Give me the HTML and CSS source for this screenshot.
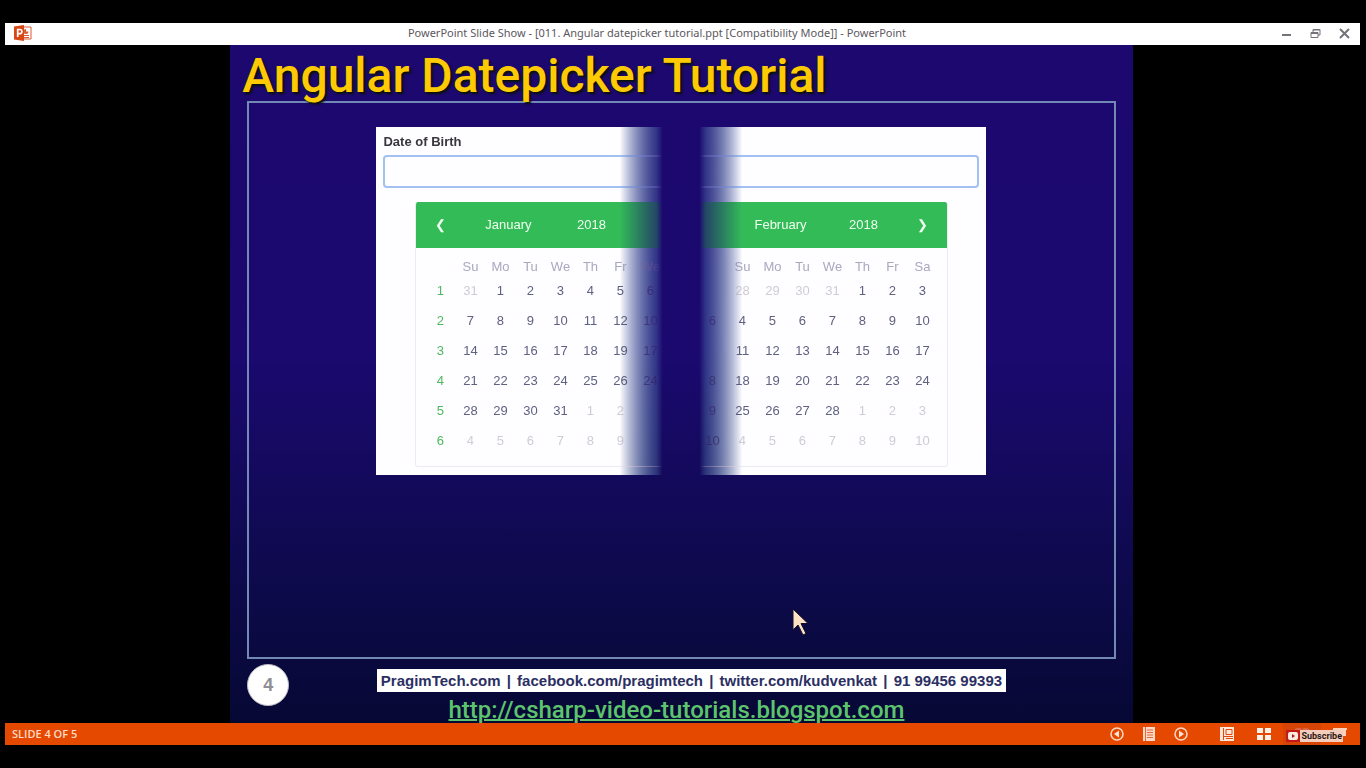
FILE: index.html
```html
<!DOCTYPE html>
<html lang="en">
<head>
<meta charset="utf-8">
<title>PowerPoint Slide Show</title>
<link rel="stylesheet" href="styles.css">
</head>
<body>
<header class="titlebar">
  <svg class="app-logo" viewBox="0 0 18 16" width="18" height="16" aria-hidden="true">
    <path d="M9 2h8v12H9" fill="#fff" stroke="#dc5a34" stroke-width="1"/>
    <path d="M12 4a2.5 2.5 0 1 0 2.500 2.500H12z" fill="#dc5a34"/>
    <path d="M10 10.500h5M10 12.500h5" stroke="#dc5a34"/>
    <path d="M0 1.500 10 0v16L0 14.500z" fill="#d94717"/>
    <path d="M3.700 12V4.500h2.100a2 2 0 0 1 0 4.200H3.700" fill="none" stroke="#fff" stroke-width="1.700"/>
  </svg>
  <h1 class="window-title">PowerPoint Slide Show - [011. Angular datepicker tutorial.ppt [Compatibility Mode]] - PowerPoint</h1>
  <div class="window-buttons">
    <button type="button" aria-label="Minimize"><svg viewBox="0 0 11 11" width="11" height="11"><path d="M1 7h9" stroke="#77727a" stroke-width="2"/></svg></button>
    <button type="button" aria-label="Restore"><svg viewBox="0 0 11 11" width="11" height="11"><path d="M3 4V1.500h7V7H8M3 2h7M1 4.500h7v5H1zM1 5.500h7" fill="none" stroke="#77727a"/></svg></button>
    <button type="button" aria-label="Close"><svg viewBox="0 0 11 11" width="11" height="11"><path d="M1 1l9 9M10 1l-9 9" stroke="#77727a" stroke-width="2"/></svg></button>
  </div>
</header>

<main class="slide">
  <h2 class="slide-title">Angular Datepicker Tutorial</h2>
  <section class="frame">
    <div class="picker">
      <label class="field-label" for="dob">Date of Birth</label>
      <input class="field" id="dob" type="text">
      <div class="calendar">
        <div class="months-bar">
          <div class="month-head">
            <button type="button" aria-label="Previous">❮</button>
            <button type="button">January</button>
            <button type="button">2018</button>
          </div>
          <div class="month-head">
            <span></span>
            <button type="button">February</button>
            <button type="button">2018</button>
            <span></span>
            <button type="button" aria-label="Next">❯</button>
          </div>
        </div>
        <div class="months">
          <table class="month">
            <thead><tr><th></th><th>Su</th><th>Mo</th><th>Tu</th><th>We</th><th>Th</th><th>Fr</th><th>We</th></tr></thead>
            <tbody>
              <tr><th>1</th><td class="other">31</td><td>1</td><td>2</td><td>3</td><td>4</td><td>5</td><td>6</td></tr>
              <tr><th>2</th><td>7</td><td>8</td><td>9</td><td>10</td><td>11</td><td>12</td><td>10</td></tr>
              <tr><th>3</th><td>14</td><td>15</td><td>16</td><td>17</td><td>18</td><td>19</td><td>17</td></tr>
              <tr><th>4</th><td>21</td><td>22</td><td>23</td><td>24</td><td>25</td><td>26</td><td>24</td></tr>
              <tr><th>5</th><td>28</td><td>29</td><td>30</td><td>31</td><td class="other">1</td><td class="other">2</td><td></td></tr>
              <tr><th>6</th><td class="other">4</td><td class="other">5</td><td class="other">6</td><td class="other">7</td><td class="other">8</td><td class="other">9</td><td></td></tr>
            </tbody>
          </table>
          <table class="month">
            <thead><tr><th></th><th>Su</th><th>Mo</th><th>Tu</th><th>We</th><th>Th</th><th>Fr</th><th>Sa</th></tr></thead>
            <tbody>
              <tr><td></td><td class="other">28</td><td class="other">29</td><td class="other">30</td><td class="other">31</td><td>1</td><td>2</td><td>3</td></tr>
              <tr><td>6</td><td>4</td><td>5</td><td>6</td><td>7</td><td>8</td><td>9</td><td>10</td></tr>
              <tr><td></td><td>11</td><td>12</td><td>13</td><td>14</td><td>15</td><td>16</td><td>17</td></tr>
              <tr><td>8</td><td>18</td><td>19</td><td>20</td><td>21</td><td>22</td><td>23</td><td>24</td></tr>
              <tr><td>9</td><td>25</td><td>26</td><td>27</td><td>28</td><td class="other">1</td><td class="other">2</td><td class="other">3</td></tr>
              <tr><td>10</td><td class="other">4</td><td class="other">5</td><td class="other">6</td><td class="other">7</td><td class="other">8</td><td class="other">9</td><td class="other">10</td></tr>
            </tbody>
          </table>
        </div>
      </div>
    </div>
  </section>
  <footer class="slide-footer">
    <span class="slide-number">4</span>
    <div class="credits">
      <p class="contact">PragimTech.com <span>|</span> facebook.com/pragimtech <span>|</span> twitter.com/kudvenkat <span>|</span> 91 99456 99393</p>
      <a class="site" href="http://csharp-video-tutorials.blogspot.com">http://csharp-video-tutorials.blogspot.com</a>
    </div>
  </footer>
  <svg class="pointer" viewBox="0 0 18 30" width="18" height="30" aria-hidden="true"><path d="M2 1v21l5-5 5 10 3-1.500-5-10h7z" fill="#fde2c4" stroke="#14102a" stroke-width="1"/></svg>
</main>

<footer class="statusbar">
  <span class="slide-count">SLIDE 4 OF 5</span>
  <nav class="tools" aria-label="Slide show">
    <button type="button" aria-label="Previous slide"><svg viewBox="0 0 14 14" width="14" height="14"><circle cx="7" cy="7" r="6" fill="none" stroke="#ffd9c6" stroke-width="1.500"/><path d="M9 3.500v7L4 7z" fill="#ffe6da"/></svg></button>
    <button type="button" aria-label="Menu"><svg viewBox="0 0 14 14" width="14" height="14"><path d="M1 0h12v14H1z" fill="#ffd9c6"/><path d="M3.500 0v14M5 3h6M5 5.500h6M5 8h6M5 10.500h6" stroke="#e1683a"/></svg></button>
    <button type="button" aria-label="Next slide"><svg viewBox="0 0 14 14" width="14" height="14"><circle cx="7" cy="7" r="6" fill="none" stroke="#ffd9c6" stroke-width="1.500"/><path d="M5 3.500v7L10 7z" fill="#ffe6da"/></svg></button>
    <button type="button" class="view-start" aria-label="Normal view"><svg viewBox="0 0 14 14" width="14" height="14"><path d="M0 0h14v14H0z" fill="#ffe6da"/><path d="M3.500 1v12M4 9.500h9" stroke="#e14a0c"/><path d="M6 2.500h6v5H6zM6 11.500h7" fill="none" stroke="#e14a0c"/></svg></button>
    <button type="button" aria-label="Slide sorter"><svg viewBox="0 0 16 14" width="16" height="14"><path d="M1 1h6v5H1zM9 1h6v5H9zM1 8h6v5H1zM9 8h6v5H9z" fill="#fff1e8"/></svg></button>
    <button type="button" class="current" aria-label="Reading view"><svg viewBox="0 0 16 14" width="16" height="14"><path d="M1 2q4-2 7 0 3-2 7 0v10q-4-2-7 0-3-2-7 0z" fill="#dd6a45"/><path d="M8 2v10M3 5h3M10 5h3" stroke="#c13f0a"/></svg></button>
    <button type="button" aria-label="Slide show"><svg viewBox="0 0 16 14" width="16" height="14"><path d="M1 1h14v2H1zM2 3h12v6H2z" fill="#ffd0ba"/><path d="M8 9v3M5 13l3-3 3 3" stroke="#ffd0ba" fill="none"/></svg></button>
    <a class="subscribe" href="#subscribe"><svg viewBox="0 0 14 12" width="14" height="12" aria-hidden="true"><path d="M0 0h14v12H0z" fill="#c21a14"/><rect x="2" y="2" width="10" height="8" rx="2" fill="#fbe9e2"/><path d="M6 4v4l3-2z" fill="#a8180f"/></svg><span>Subscribe</span></a>
  </nav>
</footer>
</body>
</html>
```
FILE: styles.css
```css
* { box-sizing: border-box; }

body {
  margin: 0;
  min-height: 100vh;
  padding: 23px 6px 23px 5px;
  display: flex;
  flex-direction: column;
  background: #000;
  font-family: "Liberation Sans", Arial, sans-serif;
}

button {
  padding: 0;
  border: 0;
  background: none;
  color: inherit;
  font: inherit;
}

svg { display: block; }

h1, h2, p { margin: 0; }

/* Window title bar */
.titlebar {
  height: 22px;
  padding: 0 10px 2px 9px;
  display: grid;
  grid-template-columns: 1fr auto 1fr;
  align-items: center;
  background: #fff;
}

.window-title {
  padding-right: 50px;
  font: 400 11px/20px "Noto Sans", "Open Sans", sans-serif;
  color: #5c575e;
}

.window-buttons {
  display: flex;
  gap: 18px;
  justify-content: flex-end;
}

/* Slide */
.slide {
  position: relative;
  flex: 1;
  align-self: center;
  width: 66.6%;
  margin-right: 2px;
  padding: 0 17px;
  display: flex;
  flex-direction: column;
  background: linear-gradient(#1c086e 0%, #1b0970 45%, #0b0a45 85%, #060834 100%);
}

.slide-title {
  position: relative;
  height: 56px;
  margin-left: -5px;
  font: 500 48px/62px Roboto, sans-serif;
  color: #fdca04;
  text-shadow: 2px 2px 2px #0a1208;
  white-space: nowrap;
}

.frame {
  flex: 1;
  padding: 24px 0;
  border: 2px solid #7389b5;
}

/* The picture fades out towards its middle */
.picker {
  width: 610px;
  max-width: 100%;
  height: 348px;
  margin: 0 auto;
  padding: 7px;
  background: linear-gradient(90deg, #fefdff 40%, #5c86b4 46%, #5c86b4 54%, #fefdff 60%);
  mask-image: linear-gradient(90deg, #000 40%, rgba(0, 0, 0, 0.35) 46%, transparent 47%, transparent 53%, rgba(0, 0, 0, 0.35) 54%, #000 60%);
}

.field-label {
  display: block;
  font-size: 13px;
  font-weight: 700;
  line-height: 16px;
  color: #3a363f;
}

.field {
  display: block;
  width: 100%;
  height: 33px;
  margin-top: 5px;
  border: 2px solid #a3c1f0;
  border-radius: 4px;
  background: transparent;
}

.calendar {
  margin: 14px 31px 0 32px;
  border: 1px solid #eeeaf2;
  border-top: 0;
  border-radius: 3px;
  overflow: hidden;
}

.months-bar,
.months {
  display: flex;
  justify-content: space-between;
  padding: 0 10px 0 9px;
}

.months-bar {
  background: #33bb58;
  color: #f0fff0;
}

.month-head {
  width: 240px;
  display: grid;
  grid-template-columns: 30px 106px 60px 14px 30px;
  font-size: 13px;
  line-height: 46px;
  text-align: center;
}

.months {
  padding-top: 11px;
  padding-bottom: 11px;
}

.month {
  width: 240px;
  table-layout: fixed;
  border-collapse: collapse;
  font-size: 13px;
  text-align: center;
  color: #5f6180;
}

.month th,
.month td {
  height: 30px;
  padding: 0;
  font-weight: 400;
}

.month thead th {
  height: 16px;
  line-height: 16px;
  color: #a9a8bf;
}

.month tbody th { color: #4fb860; }

.month .other { color: #d0ccd4; }

/* Slide footer */
.slide-footer {
  height: 64px;
  display: grid;
  grid-template-columns: 13fr auto 11fr;
}

.slide-number {
  width: 42px;
  height: 42px;
  margin-top: 5px;
  border: 1px solid #b9b9c4;
  border-radius: 50%;
  background: #fff;
  color: #8f8f94;
  font-size: 18px;
  font-weight: 700;
  line-height: 40px;
  text-align: center;
}

.credits {
  padding-top: 10px;
  display: flex;
  flex-direction: column;
  align-items: center;
}

.contact {
  padding: 0 4px;
  background: #fff;
  color: #2b2f63;
  font-size: 15px;
  font-weight: 700;
  line-height: 23px;
  white-space: nowrap;
}

.contact span { margin: 0 2px; }

.site {
  margin: 4px 30px 0 0;
  color: #5cc46c;
  font: 500 24px/28px Roboto, sans-serif;
  text-decoration-thickness: 2px;
}

.pointer {
  position: absolute;
  left: 62.1%;
  top: 83%;
}

/* Status bar */
.statusbar {
  height: 22px;
  padding: 0 1px 0 7px;
  display: flex;
  align-items: center;
  justify-content: space-between;
  background: #e54900;
}

.slide-count {
  font: 600 11px/20px "Open Sans", sans-serif;
  color: #ffd9c6;
}

.tools {
  position: relative;
  height: 100%;
  display: flex;
  align-items: stretch;
}

.tools button {
  width: 32px;
  display: grid;
  place-items: center;
}

.tools .view-start { margin: 0 2px 0 14px; }

.tools button:nth-of-type(n + 5) { width: 38px; }

.tools .current { background: #d64507; }

.subscribe {
  position: absolute;
  right: 16px;
  top: 7px;
  display: flex;
  color: #2c1711;
  font: 700 9px/12px Roboto, sans-serif;
  text-decoration: none;
}

.subscribe span {
  padding: 0 1px;
  background: #f4cdbd;
}
```
